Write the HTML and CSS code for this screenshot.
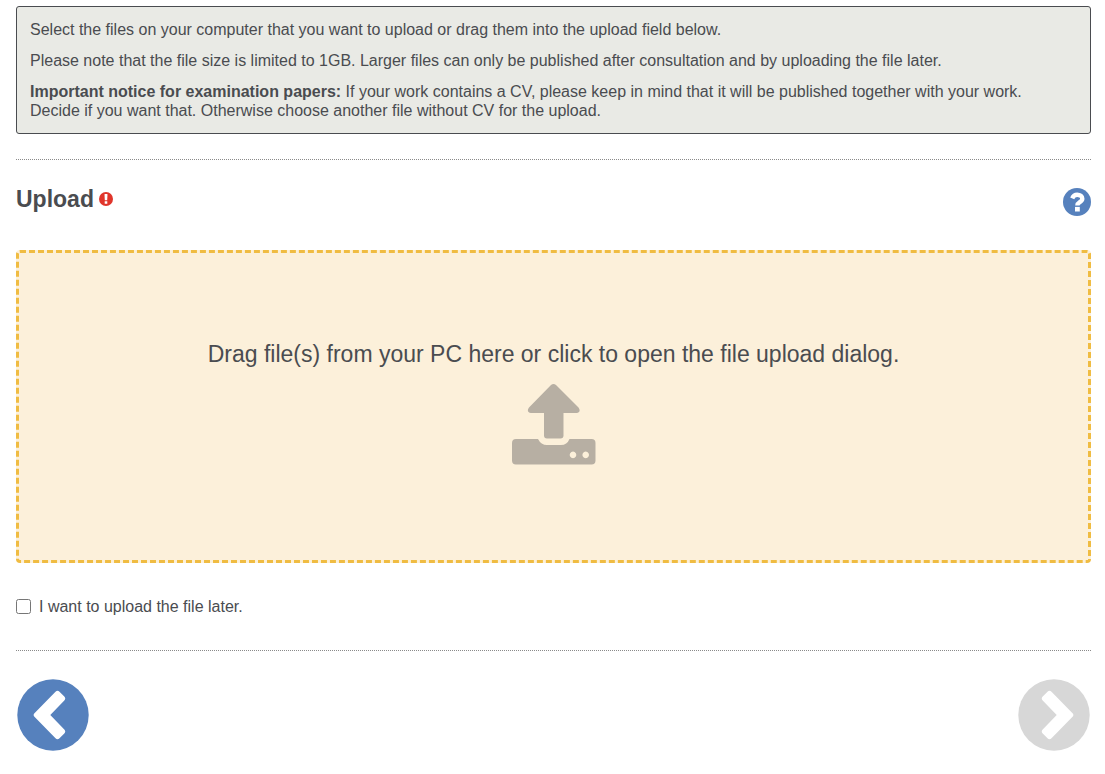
FILE: index.html
```html
<!DOCTYPE html>
<html lang="en">
<head>
<meta charset="utf-8">
<title>Upload</title>
<link rel="stylesheet" href="styles.css">
</head>
<body>
<main class="page">
  <section class="notice">
    <p>Select the files on your computer that you want to upload or drag them into the upload field below.</p>
    <p>Please note that the file size is limited to 1GB. Larger files can only be published after consultation and by uploading the file later.</p>
    <p><strong>Important notice for examination papers:</strong> If your work contains a CV, please keep in mind that it will be published together with your work. Decide if you want that. Otherwise choose another file without CV for the upload.</p>
  </section>

  <section class="upload">
    <header class="upload-header">
      <h2 class="title">Upload
        <svg class="required" viewBox="0 0 14 14" role="img" aria-label="required">
          <circle cx="7" cy="7" r="7" fill="#e0352b"/>
          <path d="M5.800 2h2.400q.3 0 .3.400L8.200 8.200H5.800L5.500 2.400Q5.500 2 5.800 2zM5.700 9.300h2.600v2.500H5.700z" fill="#fff"/>
        </svg>
      </h2>
      <button class="help" type="button" aria-label="Help">
        <svg viewBox="0 0 28 28">
          <circle cx="14" cy="14" r="14" fill="#5681bd"/>
          <path d="M9.200 10.300C10.200 8 11.900 6.800 14.200 6.800c2.900 0 5.100 1.500 5.100 4 0 3.500-4.900 3.300-4.900 6.600" fill="none" stroke="#fff" stroke-width="4.400"/>
          <path d="M12 18.900h4.800v4.600H12z" fill="#fff"/>
        </svg>
      </button>
    </header>

    <button class="dropzone" type="button">
      <span>Drag file(s) from your PC here or click to open the file upload dialog.</span>
      <svg class="upload-icon" viewBox="0 0 84 81" aria-hidden="true">
        <path d="M39 1Q41.500 -1 44 1L66.500 23.500Q68.500 26 67 28Q66 29 64.500 29H51.500V51.500Q51.500 54.500 48.500 54.500H35Q32 54.500 32 51.500V29H19Q17.500 29 16.500 28Q15 26 17 23.500Z"/>
        <path fill-rule="evenodd" d="M4 55H26Q29 61 35 61H49Q55 61 57.500 55H79.500Q83.500 55 83.500 59V76.500Q83.500 80.500 79.500 80.500H4Q0 80.500 0 76.500V59Q0 55 4 55ZM61 67.600a3.300 3.300 0 1 0 .01 0ZM73.700 67.600a3.300 3.300 0 1 0 .01 0Z"/>
      </svg>
    </button>

    <label class="later" for="later"><input id="later" type="checkbox">I want to upload the file later.</label>
  </section>

  <nav class="steps" aria-label="Steps">
    <button class="step" type="button" aria-label="Back">
      <svg viewBox="0 0 72 72">
        <circle cx="36" cy="36" r="35.700"/>
        <path class="chevron" d="M17.200 34.500L38.500 12.700Q40.500 10.800 42.500 12.700L47.300 17.500Q49.200 19.500 47.300 21.500L33.300 36L47.300 50.500Q49.200 52.500 47.300 54.500L42.500 59.300Q40.500 61.200 38.500 59.300L17.200 37.500Q15.800 36 17.200 34.500Z"/>
      </svg>
    </button>
    <button class="step" type="button" aria-label="Next" disabled>
      <svg viewBox="0 0 72 72">
        <circle cx="36" cy="36" r="35.700"/>
        <path class="chevron" d="M54.800 34.500L33.500 12.700Q31.500 10.800 29.500 12.700L24.700 17.500Q22.800 19.500 24.700 21.500L38.700 36L24.700 50.500Q22.800 52.500 24.700 54.500L29.500 59.300Q31.500 61.200 33.500 59.300L54.800 37.500Q56.200 36 54.800 34.500Z"/>
      </svg>
    </button>
  </nav>
</main>
</body>
</html>
```
FILE: styles.css
```css
* {
  box-sizing: border-box;
}

body {
  margin: 0;
  background: #fff;
  color: #4a4c50;
  font: 16px/19px "Liberation Sans", Arial, sans-serif;
}

button {
  margin: 0;
  padding: 0;
  border: 0;
  background: none;
  color: inherit;
  font: inherit;
  cursor: pointer;
}

svg {
  display: block;
}

.page {
  padding: 6px 14px 22px 16px;
}

.notice {
  display: flex;
  flex-direction: column;
  gap: 12px;
  padding: 13px 40px 13px 13px;
  border: 1px solid #4a4c50;
  border-radius: 3px;
  background: #e9eae5;
}

.notice p {
  margin: 0;
}

.upload {
  margin-top: 25px;
  padding: 24px 0 32px;
  border-top: 1px dotted #8a8a8a;
  border-bottom: 1px dotted #8a8a8a;
}

.upload-header {
  display: flex;
  justify-content: space-between;
  align-items: flex-start;
}

.title {
  display: flex;
  align-items: center;
  gap: 5px;
  margin: 0;
  font-size: 23px;
  line-height: 30px;
}

.required {
  width: 14px;
  height: 14px;
}

.help {
  width: 28px;
  margin: 4px 0 34px;
}

.dropzone {
  display: flex;
  flex-direction: column;
  align-items: center;
  gap: 16px;
  width: 100%;
  padding: 87px 16px 95px;
  border: 3px dashed #f0bc42;
  border-radius: 4px;
  background: #fcf0da;
  font-size: 23px;
  line-height: 28px;
}

.upload-icon {
  width: 84px;
  height: 81px;
  fill: #b7afa3;
}

.later {
  display: inline-flex;
  align-items: center;
  gap: 8px;
  margin-top: 34px;
}

.later input {
  width: 15px;
  height: 15px;
  margin: 0;
}

.steps {
  display: flex;
  justify-content: space-between;
  padding: 28px 1px 0;
}

.step {
  width: 72px;
  fill: #5681bd;
}

.step:disabled {
  fill: #d7d7d7;
  cursor: default;
}

.chevron {
  fill: #fff;
}
```
